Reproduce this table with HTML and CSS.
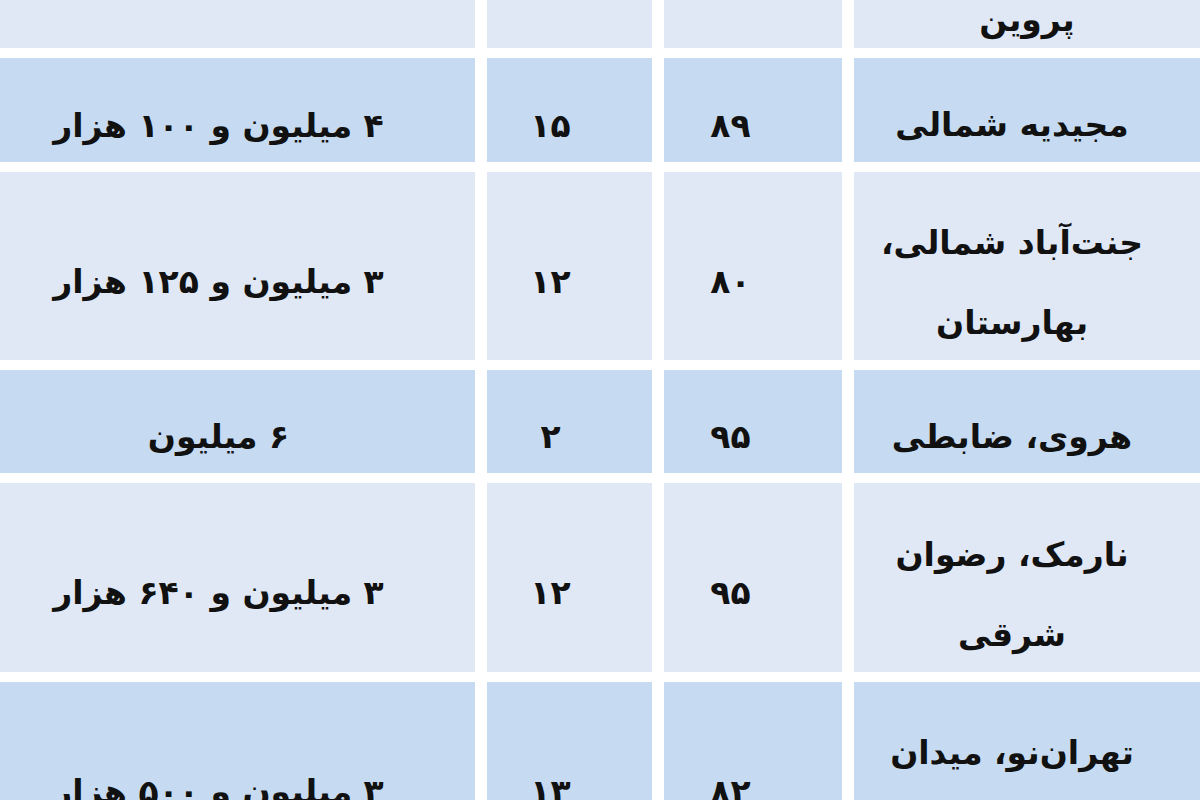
FILE: index.html
```html
<!DOCTYPE html>
<html lang="fa" dir="rtl">
<head>
<meta charset="utf-8">
<title>جدول اجاره</title>
<link rel="stylesheet" href="styles.css">
</head>
<body>
<div class="table">
  <div class="cell light name r0"><span class="line">پروین</span></div>
  <div class="cell light r0"></div>
  <div class="cell light r0"></div>
  <div class="cell light r0"></div>

  <div class="cell dark name"><span class="line">مجیدیه شمالی</span></div>
  <div class="cell dark area">۸۹</div>
  <div class="cell dark age">۱۵</div>
  <div class="cell dark price">۴ میلیون و ۱۰۰ هزار</div>

  <div class="cell light name tall"><span class="line">جنت‌آباد شمالی،</span><span class="line">بهارستان</span></div>
  <div class="cell light area">۸۰</div>
  <div class="cell light age">۱۲</div>
  <div class="cell light price">۳ میلیون و ۱۲۵ هزار</div>

  <div class="cell dark name"><span class="line">هروی، ضابطی</span></div>
  <div class="cell dark area">۹۵</div>
  <div class="cell dark age">۲</div>
  <div class="cell dark price">۶ میلیون</div>

  <div class="cell light name tall"><span class="line">نارمک، رضوان</span><span class="line">شرقی</span></div>
  <div class="cell light area">۹۵</div>
  <div class="cell light age">۱۲</div>
  <div class="cell light price">۳ میلیون و ۶۴۰ هزار</div>

  <div class="cell dark name tall"><span class="line">تهران‌نو، میدان</span><span class="line">&nbsp;</span></div>
  <div class="cell dark area">۸۲</div>
  <div class="cell dark age">۱۳</div>
  <div class="cell dark price">۳ میلیون و ۵۰۰ هزار</div>
</div>
</body>
</html>
```
FILE: styles.css
```css
html, body {
  margin: 0;
  padding: 0;
  background: #ffffff;
  width: 1200px;
  height: 800px;
  overflow: hidden;
}

.table {
  display: grid;
  grid-template-columns: 346px 178px 165px 475px;
  grid-template-rows: 48px 104px 188px 103px 189px 188px;
  column-gap: 12px;
  row-gap: 10px;
  font-family: "DejaVu Sans", sans-serif;
  font-weight: bold;
  font-size: 33px;
  color: #111111;
}

.cell {
  display: flex;
  align-items: center;
  justify-content: center;
  padding-top: 30px;
  box-sizing: border-box;
  white-space: nowrap;
}

.light { background: #e0e8f6; }
.dark { background: #c6dbf1; }

.name {
  flex-direction: column;
  padding-right: 30px;
  line-height: 80px;
}

.name.tall { padding-top: 34px; }

.name.r0 {
  justify-content: flex-end;
  padding-top: 0;
  padding-right: 0;
  padding-bottom: 10px;
  line-height: 36px;
}

.r0 { padding-top: 0; }

.area { padding-right: 45px; }
.age { padding-right: 38px; }
.price { padding-right: 38px; }
```
